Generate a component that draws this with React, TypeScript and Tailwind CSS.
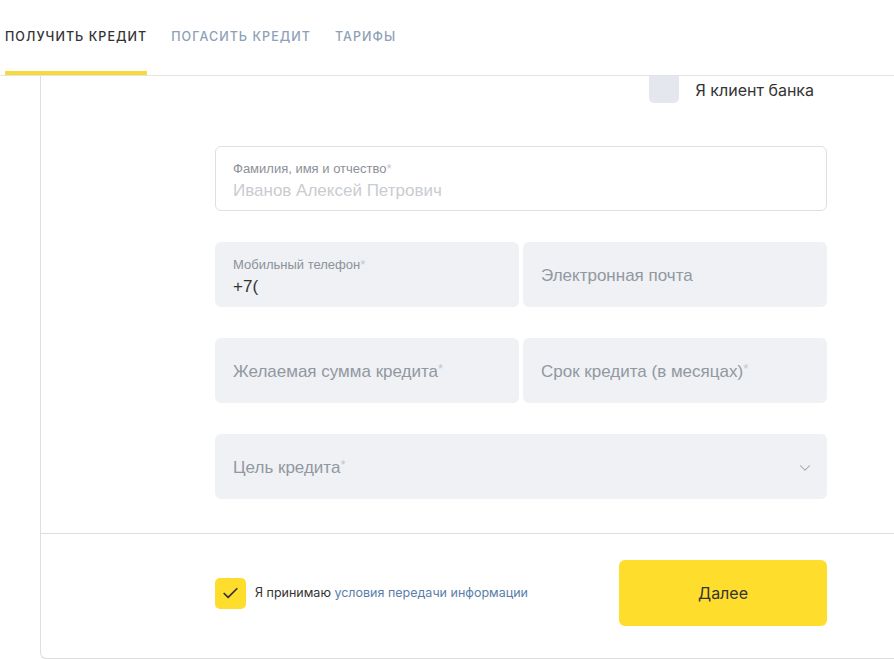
import { ChevronDown, Check } from "lucide-react";

const font = { fontFamily: '"Liberation Sans", Arial, sans-serif' };
const inter = { fontFamily: 'Inter, "Liberation Sans", sans-serif' };

function Tabs() {
  return (
    <div className="flex h-[76px] items-stretch border-b border-[#e3e3e3] pl-[5px] gap-[24px]" style={inter}>
      <div className="flex items-center border-b-[4px] border-[#f8d93a] pt-[4px] text-[12.5px] font-medium tracking-[1.05px] text-[#333333]">
        ПОЛУЧИТЬ КРЕДИТ
      </div>
      <div className="flex items-center text-[12.5px] font-medium tracking-[1.05px] text-[#8da0b5]">
        ПОГАСИТЬ КРЕДИТ
      </div>
      <div className="flex items-center text-[12.5px] font-medium tracking-[1.05px] text-[#8da0b5]">
        ТАРИФЫ
      </div>
    </div>
  );
}

function LabeledField({ label, value, white, muted }: { label: string; value: string; white?: boolean; muted?: boolean }) {
  return (
    <div
      className={
        white
          ? "flex h-[65px] flex-1 flex-col rounded-[6px] border border-[#dcdfe4] bg-white px-[17px] pt-[14px]"
          : "flex h-[65px] flex-1 flex-col rounded-[6px] bg-[#eff1f5] px-[18px] pt-[15px]"
      }
    >
      <div className="text-[13px] leading-[16px] text-[#8c9198]">
        {label}
        <span className="text-[#c3c7cc]">*</span>
      </div>
      <div className={muted ? "mt-[4px] text-[17px] leading-[20px] text-[#c9ccd1]" : "mt-[4px] text-[17px] leading-[20px] text-[#333333]"}>
        {value}
      </div>
    </div>
  );
}

function PlaceholderField({ text, star }: { text: string; star?: boolean }) {
  return (
    <div className="flex h-[65px] flex-1 items-center rounded-[6px] bg-[#eff1f5] px-[18px] pt-[2px] text-[17px] text-[#9298a0]">
      {text}
      {star && <span className="mb-[6px] text-[13px] text-[#c3c7cc]">*</span>}
    </div>
  );
}

export default function App() {
  return (
    <div className="relative h-[659px] w-[894px] overflow-hidden bg-white" style={font}>
      <Tabs />
      <div className="pl-[40px]">
        <div className="overflow-hidden rounded-bl-[6px] border-b border-l border-[#dedede]">
          <div className="flex flex-col pb-[34px] pl-[174px]">
            <div className="w-[612px]">
              <div className="-mt-[3px] flex items-center justify-end gap-[17px] pr-[13px]">
                <div className="h-[30px] w-[30px] rounded-[5px] bg-[#e4e7ee]" />
                <span className="pt-[3px] text-[16px] text-[#333333]" style={inter}>
                  Я клиент банка
                </span>
              </div>
              <div className="mt-[43px] flex flex-col gap-[31px]">
                <div className="flex">
                  <LabeledField label="Фамилия, имя и отчество" value="Иванов Алексей Петрович" white muted />
                </div>
                <div className="flex gap-[4px]">
                  <LabeledField label="Мобильный телефон" value="+7(" />
                  <PlaceholderField text="Электронная почта" />
                </div>
                <div className="flex gap-[4px]">
                  <PlaceholderField text="Желаемая сумма кредита" star />
                  <PlaceholderField text="Срок кредита (в месяцах)" star />
                </div>
                <div className="flex h-[65px] items-center justify-between rounded-[6px] bg-[#eff1f5] pl-[18px] pr-[13px] pt-[2px] text-[17px] text-[#9298a0]">
                  <span>
                    Цель кредита<span className="text-[13px] text-[#c3c7cc] align-top">*</span>
                  </span>
                  <ChevronDown className="h-[18px] w-[18px] text-[#9aa0a8]" strokeWidth={1.4} />
                </div>
              </div>
            </div>
          </div>
          <div className="border-t border-[#dedede] pb-[32px] pl-[174px] pt-[26px]">
            <div className="flex w-[612px] items-center justify-between">
              <div className="flex items-center gap-[9px]" style={inter}>
                <div className="flex h-[31px] w-[31px] items-center justify-center rounded-[5px] bg-[#ffdd2d]">
                  <Check className="h-[19px] w-[19px] text-[#333333]" strokeWidth={2.2} />
                </div>
                <span className="text-[12.5px] text-[#333333]">
                  Я принимаю <span className="text-[#5a7ea8]">условия передачи информации</span>
                </span>
              </div>
              <button className="flex h-[66px] w-[208px] items-center justify-center rounded-[6px] bg-[#ffdd2d] text-[16px] text-[#333333]" style={inter}>
                Далее
              </button>
            </div>
          </div>
        </div>
      </div>
    </div>
  );
}
